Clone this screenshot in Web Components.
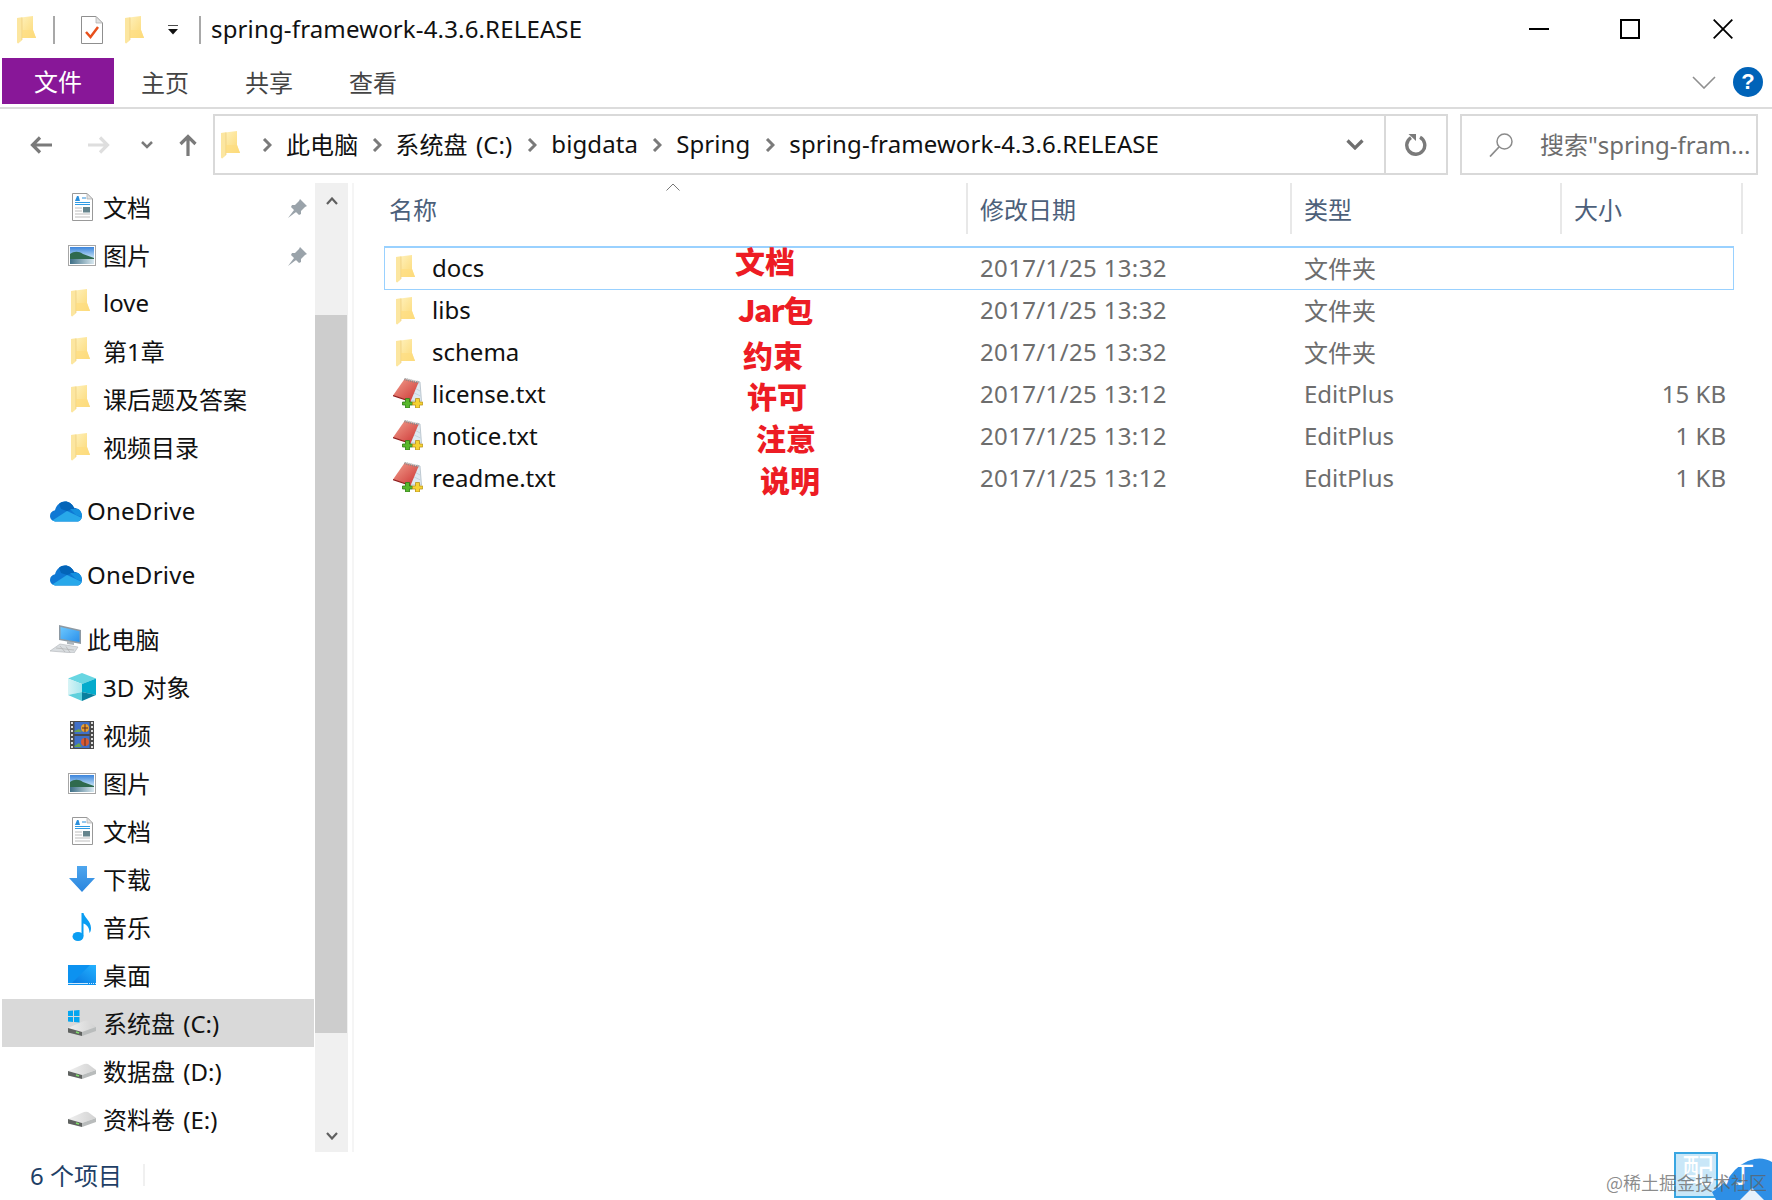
<!DOCTYPE html>
<html lang="zh-CN">
<head>
<meta charset="utf-8">
<title>spring-framework-4.3.6.RELEASE</title>
<style>
  html, body { margin: 0; background: #fff; }
  body { font-family: "Noto Sans", "Noto Sans CJK SC", sans-serif; font-size: 24px; }
</style>
</head>
<body>
<explorer-window>
  <win-titlebar slot="top">spring-framework-4.3.6.RELEASE</win-titlebar>
  <win-ribbon slot="top"></win-ribbon>
  <win-navbar slot="top"></win-navbar>

  <win-sidebar slot="side">
    <nav-group>
      <nav-item icon="doc" pinned>文档</nav-item>
      <nav-item icon="picture" pinned>图片</nav-item>
      <nav-item icon="folder">love</nav-item>
      <nav-item icon="folder">第1章</nav-item>
      <nav-item icon="folder">课后题及答案</nav-item>
      <nav-item icon="folder">视频目录</nav-item>
    </nav-group>
    <nav-group><nav-item icon="cloud" top>OneDrive</nav-item></nav-group>
    <nav-group><nav-item icon="cloud" top>OneDrive</nav-item></nav-group>
    <nav-group>
      <nav-item icon="computer" top>此电脑</nav-item>
      <nav-item icon="cube">3D 对象</nav-item>
      <nav-item icon="film">视频</nav-item>
      <nav-item icon="picture">图片</nav-item>
      <nav-item icon="doc">文档</nav-item>
      <nav-item icon="download">下载</nav-item>
      <nav-item icon="music">音乐</nav-item>
      <nav-item icon="desktop">桌面</nav-item>
      <nav-item icon="cdrive" selected>系统盘 (C:)</nav-item>
      <nav-item icon="drive">数据盘 (D:)</nav-item>
      <nav-item icon="drive">资料卷 (E:)</nav-item>
    </nav-group>
  </win-sidebar>

  <file-list slot="main">
    <file-row icon="folder" date="2017/1/25 13:32" kind="文件夹" focused>docs</file-row>
    <file-row icon="folder" date="2017/1/25 13:32" kind="文件夹">libs</file-row>
    <file-row icon="folder" date="2017/1/25 13:32" kind="文件夹">schema</file-row>
    <file-row icon="notebook" date="2017/1/25 13:12" kind="EditPlus" size="15 KB">license.txt</file-row>
    <file-row icon="notebook" date="2017/1/25 13:12" kind="EditPlus" size="1 KB">notice.txt</file-row>
    <file-row icon="notebook" date="2017/1/25 13:12" kind="EditPlus" size="1 KB">readme.txt</file-row>
    <red-note slot="notes" x="351" y="-4">文档</red-note>
    <red-note slot="notes" x="354" y="45" style="letter-spacing:-1.500px">Jar包</red-note>
    <red-note slot="notes" x="359" y="90">约束</red-note>
    <red-note slot="notes" x="363" y="131">许可</red-note>
    <red-note slot="notes" x="372" y="173">注意</red-note>
    <red-note slot="notes" x="376" y="215">说明</red-note>
  </file-list>

  <win-statusbar slot="bottom">6 个项目</win-statusbar>
  <corner-mark slot="over"></corner-mark>
</explorer-window>

<script>
// every icon is hand drawn, the viewBox doubles as its pixel size
const ICONS = {
  folder: `<svg width="19" height="28" viewBox="0 0 19 28">
    <defs><linearGradient id="f" x1="0" y1="0" x2="1" y2="1"><stop offset="0" stop-color="#fff4c4"/><stop offset="1" stop-color="#fbd468"/></linearGradient></defs>
    <path d="M0 2 16 0V14L19 22H5V24L1 27.5 0 26Z" fill="url(#f)"/>
    <path d="M0 2 5 1.4V22L5 24 1 27.5 0 26Z" fill="#fce6a0"/>
    <path d="M5 1.4V24" stroke="#eac873" stroke-width=".6"/>
    <path d="M5 14H16L19 22H5Z" fill="#fddd80" opacity=".7"/>
  </svg>`,
  doc: `<svg width="21" height="28" viewBox="0 0 21 28">
    <path d="M.5.5H15L20.5 6V27.5H.5Z" fill="#fff" stroke="#999"/>
    <path d="M15 .5V6H20.5Z" fill="#e4e4e4" stroke="#aaa" stroke-width=".7"/>
    <path d="M3 8 5 3H6.5L8 8Z" fill="#2a8fdc"/><path d="M10 5H14" stroke="#2a8fdc"/>
    <path d="M3 9.5H18M3 11.5H18" stroke="#2f9be4"/>
    <path d="M3 15H10M3 18H10M3 21H18M3 24H18" stroke="#bdbdbd"/>
    <rect x="11" y="14" width="7" height="5.5" fill="#66858d"/>
  </svg>`,
  picture: `<svg width="28" height="21" viewBox="0 0 28 21">
    <defs><linearGradient id="s" x1="0" y1="0" x2="0" y2="1"><stop offset="0" stop-color="#3c85dc"/><stop offset=".6" stop-color="#bcdcf2"/></linearGradient>
    <linearGradient id="w" x1="0" y1="0" x2="1" y2="0"><stop offset="0" stop-color="#3e6f86"/><stop offset="1" stop-color="#d8e8f0"/></linearGradient></defs>
    <rect x=".5" y=".5" width="27" height="20" fill="#fff" stroke="#a6a6a6"/>
    <rect x="2" y="2" width="24" height="17" fill="url(#s)"/>
    <path d="M2 9C6 6 11 6 15 9L26 13V15H2Z" fill="#2f6a4e"/>
    <rect x="2" y="14" width="24" height="5" fill="url(#w)"/>
  </svg>`,
  cloud: `<svg width="32" height="21" viewBox="0 0 32 21">
    <defs><clipPath id="c"><path d="M6.5 20.5C2.500 20.500 0 18 0 15 0 12 2 9.800 5 9.300 6.500 3.500 11 .5 15 .5 19 .5 22.500 3 24 6.800 28.500 7 32 10.500 32 15 32 18.500 29.500 20.500 27 20.500Z"/></clipPath></defs>
    <g clip-path="url(#c)">
      <rect width="32" height="21" fill="#0f78d4"/>
      <path d="M8 0H24V8L17 10 11 8Z" fill="#0364b8"/>
      <path d="M20 8 32 8V16L26 14Z" fill="#1490df"/>
      <path d="M0 21 17 10 32 17V21Z" fill="#28a8ea"/>
    </g>
  </svg>`,
  computer: `<svg width="32" height="28" viewBox="0 0 32 28">
    <defs><linearGradient id="m" x1="0" y1="0" x2="1" y2="1"><stop offset="0" stop-color="#6cc8ff"/><stop offset="1" stop-color="#2b90ea"/></linearGradient></defs>
    <path d="M9 0 31 5V19L9 15Z" fill="#8d99a3"/>
    <path d="M10.500 2 29.500 6.300V17L10.500 13.700Z" fill="url(#m)"/>
    <path d="M17 16 24 17.300V20L17 19Z" fill="#aeb6bc"/>
    <path d="M0 26 10 19 28 22 24 28Z" fill="#d9dde0" stroke="#b0b4b8" stroke-width=".6"/>
    <path d="M6 23 24 25M10 21 15 27M16 21.500 20 27.500" stroke="#aaa" stroke-width=".6"/>
  </svg>`,
  cube: `<svg width="28" height="28" viewBox="0 0 28 28">
    <defs><linearGradient id="l" x1="0" y1="0" x2="1" y2="0"><stop offset="0" stop-color="#d8f4f6"/><stop offset="1" stop-color="#a6e6ee"/></linearGradient></defs>
    <path d="M14 0 28 5.500 14 11 0 5.500Z" fill="#68d6e2"/>
    <path d="M0 5.500 14 11V19L0 22Z" fill="url(#l)"/>
    <path d="M28 5.500 14 11V19L28 22Z" fill="#05abcc"/>
    <path d="M0 22 14 19V28Z" fill="#5fd0dc"/>
    <path d="M28 22 14 19V28Z" fill="#0a7f9e"/>
  </svg>`,
  film: `<svg width="24" height="28" viewBox="0 0 24 28">
    <rect width="24" height="28" fill="#4a4a4a"/>
    <path d="M2 1V27M22 1V27" stroke="#ddd" stroke-width="2" stroke-dasharray="2 2"/>
    <rect x="4.500" y="1" width="15" height="12" fill="#3f6fc8"/><rect x="4.500" y="15" width="15" height="12" fill="#3f6fc8"/>
    <path d="M4.500 10 9 8 12 11H4.500ZM4.500 25 9 22 12 26H4.500Z" fill="#6aa34c"/>
    <circle cx="15" cy="7" r="4" fill="#e8a030"/><circle cx="15" cy="21" r="4" fill="#d85a30"/>
    <path d="M15 3V11M12 7H18M15 17V25" stroke="#5a2a20"/>
  </svg>`,
  download: `<svg width="26" height="26" viewBox="0 0 26 26">
    <defs><linearGradient id="d" x1="0" y1="0" x2="0" y2="1"><stop offset="0" stop-color="#4ea6ee"/><stop offset="1" stop-color="#2a85de"/></linearGradient></defs>
    <path d="M8 0H18V12H26L13 26 0 12H8Z" fill="url(#d)"/>
  </svg>`,
  music: `<svg width="20" height="28" viewBox="0 0 20 28">
    <ellipse cx="6" cy="23.500" rx="5.500" ry="4.500" fill="#0a9df2"/>
    <path d="M9.500 0H11.500C12 4 19 8 19 15 19 17 18.500 19 17.500 20 17.500 15 15 11.500 11.500 10.500V23H9.500Z" fill="#0a9df2"/>
  </svg>`,
  desktop: `<svg width="28" height="20" viewBox="0 0 28 20">
    <defs><linearGradient id="t" x1="0" y1="1" x2="1" y2="0"><stop offset="0" stop-color="#0778e0"/><stop offset="1" stop-color="#24b2ff"/></linearGradient></defs>
    <rect width="28" height="20" fill="#0c92f0"/>
    <path d="M4 18 22 0H28V18Z" fill="url(#t)"/>
    <path d="M0 18.500H28" stroke="#fff" stroke-dasharray="20 1 1 1 1 1 1 1 1 1" stroke-width=".8"/>
  </svg>`,
  drive: `<svg width="28" height="16" viewBox="0 0 28 16">
    <defs><linearGradient id="r" x1="0" y1="0" x2="1" y2="0"><stop offset="0" stop-color="#f0f0f0"/><stop offset="1" stop-color="#d2d2d2"/></linearGradient></defs>
    <path d="M0 8 16 1Q18 .3 20 1L28 7 14 12Z" fill="url(#r)"/>
    <path d="M0 8 14 12V16L0 12.500Z" fill="#5f6260"/>
    <path d="M14 12 28 7V11L14 16Z" fill="#b9bcbc"/>
    <path d="M8 12 11 13" stroke="#7fdc6a" stroke-width="1.500"/>
  </svg>`,
  cdrive: `<svg width="28" height="26" viewBox="0 0 28 26">
    <defs><linearGradient id="r" x1="0" y1="0" x2="1" y2="0"><stop offset="0" stop-color="#f0f0f0"/><stop offset="1" stop-color="#d2d2d2"/></linearGradient></defs>
    <g transform="translate(0 10)">
      <path d="M0 8 16 1Q18 .3 20 1L28 7 14 12Z" fill="url(#r)"/>
      <path d="M0 8 14 12V16L0 12.500Z" fill="#5f6260"/>
      <path d="M14 12 28 7V11L14 16Z" fill="#b9bcbc"/>
      <path d="M8 12 11 13" stroke="#7fdc6a" stroke-width="1.500"/>
    </g>
    <path d="M0 1 5 .5V6H0ZM6 .4 11.500 0V6H6ZM0 7H5V12L0 11.500ZM6 7H11.500V12.500L6 12Z" fill="#05a6f0"/>
  </svg>`,
  notebook: `<svg width="30" height="30" viewBox="0 0 30 30">
    <defs><linearGradient id="n" x1="0" y1="0" x2="1" y2="1"><stop offset="0" stop-color="#f2a08e"/><stop offset="1" stop-color="#cc3232"/></linearGradient></defs>
    <path d="M24 3 27 4 28.500 23H16Z" fill="#dde8f0" stroke="#a9b6c0" stroke-width=".7"/>
    <path d="M20 9 27 13M19 14 27.500 18" stroke="#b9c8d4" stroke-width=".7"/>
    <path d="M0 17.500 11.500 1 25.500 4.500 17.500 23.500Z" fill="url(#n)"/>
    <path d="M11.500 1 25.500 4.500" stroke="#888" stroke-width="2.500" stroke-dasharray="1 1"/>
    <path d="M0 17.500 17.500 23.500" stroke="#8e1d1d" stroke-width="1.200"/>
    <path d="M9.500 24H12.500V20.500H16.500V24H19.500V27H16.500V30H12.500V27H9.500Z" fill="#58b82c" stroke="#2f7a18" stroke-width=".8"/>
    <path d="M19.500 24H22.500V20.500H26.500V24H29.700V27H26.500V30H22.500V27H19.500Z" fill="#f6d232" stroke="#b8921a" stroke-width=".8"/>
  </svg>`
};

class ExplorerWindow extends HTMLElement {
  constructor() {
    super();
    this.attachShadow({ mode: 'open' });
    this.shadowRoot.innerHTML = `
      <style>
        :host { display: flex; flex-direction: column; position: relative; width: 1772px; height: 1200px; overflow: hidden; background: #fff; color: #111; }
        .main { display: flex; height: 969px; }
      </style>
      <slot name="top"></slot>
      <div class="main"><slot name="side"></slot><slot name="main"></slot></div>
      <slot name="bottom"></slot>
      <slot name="over"></slot>
    `;
  }
}

class WinTitlebar extends HTMLElement {
  constructor() {
    super();
    this.attachShadow({ mode: 'open' });
    this.shadowRoot.innerHTML = `
      <style>
        :host { display: flex; align-items: center; height: 58px; padding: 2px 0 0 17px; box-sizing: border-box; color: #111; }
        .sep { width: 2px; height: 28px; background: #a8a8a8; }
        .title { margin-left: 10px; flex: 1; padding-bottom: 4px; letter-spacing: .15px; white-space: nowrap; }
        .ctl { display: flex; align-items: center; margin-right: 39px; padding-bottom: 3px; }
        svg { display: block; }
      </style>
      ${ICONS.folder}
      <div class="sep" style="margin-left:17px"></div>
      <svg style="margin-left:26px" width="22" height="28" viewBox="0 0 22 28"><path d="M.5.5H15L21.500 7V27.500H.5Z" fill="#fff" stroke="#8f8f8f"/><path d="M15 .5V7H21.500Z" fill="#e2e2e2" stroke="#aaa" stroke-width=".7"/><path d="M5 16 9.500 21 17 11" fill="none" stroke="#e8501c" stroke-width="2.500"/></svg>
      <span style="margin-left:22px;display:block">${ICONS.folder}</span>
      <svg style="margin-left:23px" width="12" height="10" viewBox="0 0 12 10"><path d="M1 0H11" stroke="#111" stroke-width="1.500"/><path d="M1 4H11L6 9.500Z" fill="#111"/></svg>
      <div class="sep" style="margin-left:20px"></div>
      <div class="title"><slot></slot></div>
      <div class="ctl">
        <svg width="20" height="20" viewBox="0 0 20 20"><path d="M0 10H20" stroke="#000" stroke-width="2"/></svg>
        <svg style="margin-left:71px" width="20" height="20" viewBox="0 0 20 20"><rect x="1" y="1" width="18" height="18" fill="none" stroke="#000" stroke-width="2"/></svg>
        <svg style="margin-left:73px" width="20" height="20" viewBox="0 0 20 20"><path d="M.7.7 19.300 19.300M19.300.7.7 19.300" stroke="#000" stroke-width="1.800"/></svg>
      </div>
    `;
  }
}

class WinRibbon extends HTMLElement {
  constructor() {
    super();
    this.attachShadow({ mode: 'open' });
    this.shadowRoot.innerHTML = `
      <style>
        :host { display: flex; height: 51px; padding-left: 2px; box-sizing: border-box; border-bottom: 2px solid #dcdcdc; color: #444; }
        .tab { height: 46px; display: flex; align-items: center; justify-content: center; width: 104px; }
        .file { width: 112px; background: #881798; color: #fff; margin-right: -1px; box-sizing: border-box; padding-bottom: 2px; }
        .right { margin-left: auto; display: flex; align-items: center; height: 46px; gap: 17px; margin-right: 9px; }
        .help { width: 30px; height: 30px; border-radius: 50%; background: #0063b8; color: #fff; font: bold 22px/30px "Liberation Sans", sans-serif; text-align: center; }
        svg { display: block; }
      </style>
      <div class="tab file">文件</div>
      <div class="tab">主页</div>
      <div class="tab">共享</div>
      <div class="tab">查看</div>
      <div class="right" style="margin-top:1px">
        <svg width="24" height="13" viewBox="0 0 24 13"><path d="M1 1 12 12 23 1" fill="none" stroke="#8f8f8f" stroke-width="1.600"/></svg>
        <div class="help">?</div>
      </div>
    `;
  }
}

class WinNavbar extends HTMLElement {
  constructor() {
    super();
    this.attachShadow({ mode: 'open' });
    // text, then the margins left and right of the chevron in front of it
    const crumbs = [
      ['此电脑', 22, 14], ['系统盘 (C:)', 14, 13], ['bigdata', 15, 14],
      ['Spring', 14, 14], ['spring-framework-4.3.6.RELEASE', 15, 14]
    ];
    const sep = (l, r) => `<svg style="margin:0 ${r}px 0 ${l}px" width="10" height="14" viewBox="0 0 10 14"><path d="M2 1 8 7 2 13" fill="none" stroke="#7a7a7a" stroke-width="3"/></svg>`;
    this.shadowRoot.innerHTML = `
      <style>
        :host { display: flex; align-items: center; height: 74px; box-sizing: border-box; padding: 0 0 3px 30px; }
        svg { display: block; flex: none; }
        .box { display: flex; align-items: center; height: 61px; box-sizing: border-box; border: 2px solid #d9d9d9; }
        .addr { width: 1235px; margin-left: 16px; padding-left: 6px; }
        .crumb { white-space: nowrap; margin-bottom: 2px; letter-spacing: .1px; word-spacing: 2px; }
        .tail { margin-left: auto; display: flex; align-items: center; height: 100%; }
        .refresh { width: 62px; height: 100%; border-left: 2px solid #d9d9d9; box-sizing: border-box; display: flex; align-items: center; justify-content: center; margin-left: 20px; }
        .search { width: 298px; margin-left: 12px; padding-left: 27px; color: #6d6d6d; white-space: nowrap; }
        .search span { margin: 0 0 2px 27px; }
      </style>
      <svg width="22" height="18" viewBox="0 0 22 18"><path d="M22 9H3M10 1.500 2.500 9 10 16.500" fill="none" stroke="#7a7a7a" stroke-width="3.200"/></svg>
      <svg style="margin-left:36px" width="22" height="18" viewBox="0 0 22 18"><path d="M0 9H19M12 1.500 19.500 9 12 16.500" fill="none" stroke="#dedede" stroke-width="3.200"/></svg>
      <svg style="margin-left:31px" width="12" height="8" viewBox="0 0 12 8"><path d="M1 1 6 6 11 1" fill="none" stroke="#7a7a7a" stroke-width="2.500"/></svg>
      <svg style="margin-left:26px" width="18" height="22" viewBox="0 0 18 22"><path d="M9 22V3M1.500 10 9 2.500 16.500 10" fill="none" stroke="#7a7a7a" stroke-width="3.200"/></svg>
      <div class="box addr">
        ${ICONS.folder}
        ${crumbs.map(c => `${sep(c[1], c[2])}<span class="crumb">${c[0]}</span>`).join('')}
        <div class="tail">
          <svg width="18" height="11" viewBox="0 0 18 11"><path d="M1.500 1.500 9 9 16.500 1.500" fill="none" stroke="#6f6f6f" stroke-width="3.200"/></svg>
          <div class="refresh"><svg width="22" height="22" viewBox="0 0 22 22"><path d="M6 3.600A9 9 0 1 0 15 3.300" fill="none" stroke="#7a7a7a" stroke-width="3.400"/><path d="M3.500 0 11 0 11 7Z" fill="#7a7a7a"/></svg></div>
        </div>
      </div>
      <div class="box search">
        <svg width="24" height="24" viewBox="0 0 24 24"><circle cx="15.500" cy="8.500" r="7.500" fill="none" stroke="#8b8b8b" stroke-width="1.500"/><path d="M10 14 1 23.500" stroke="#8b8b8b" stroke-width="1.800"/></svg>
        <span>搜索"spring-fram...</span>
      </div>
    `;
  }
}

class WinSidebar extends HTMLElement {
  constructor() {
    super();
    this.attachShadow({ mode: 'open' });
    this.shadowRoot.innerHTML = `
      <style>
        :host { display: flex; width: 354px; flex: none; height: 969px; box-sizing: border-box; border-right: 2px solid #f5f5f5; }
        .list { width: 315px; box-sizing: border-box; overflow: hidden; }
        .bar { width: 33px; display: grid; grid-template-rows: 132px 718px 1fr; background: #f0f0f0; }
        .thumb { background: #cdcdcd; margin-right: 1px; }
        .up, .down { display: flex; justify-content: center; padding-top: 14px; }
        .down { align-items: flex-end; padding: 0 0 12px; }
        svg { display: block; }
      </style>
      <div class="list"><slot></slot></div>
      <div class="bar">
        <div class="up"><svg width="12" height="8" viewBox="0 0 12 8"><path d="M1 7 6 1.500 11 7" fill="none" stroke="#606060" stroke-width="2.200"/></svg></div>
        <div class="thumb"></div>
        <div class="down"><svg width="12" height="8" viewBox="0 0 12 8"><path d="M1 1 6 6.500 11 1" fill="none" stroke="#606060" stroke-width="2.200"/></svg></div>
      </div>
    `;
  }
}

class NavGroup extends HTMLElement {
  constructor() {
    super();
    this.attachShadow({ mode: 'open' });
    this.shadowRoot.innerHTML = `
      <style>:host { display: block; margin-bottom: 16px; }</style>
      <slot></slot>
    `;
  }
}

class NavItem extends HTMLElement {
  constructor() {
    super();
    this.attachShadow({ mode: 'open' });
  }

  connectedCallback() {
    const top = this.hasAttribute('top');
    const folder = this.getAttribute('icon') === 'folder';
    const pin = this.hasAttribute('pinned') ? `<svg class="pin" width="20" height="20" viewBox="0 0 20 20"><path d="M12 1 19 8 17 9 13 13 13 16 11 17 3 9 4 7 7 7 11 3ZM6 12 0 20 8 14Z" fill="#9aa3aa"/></svg>` : '';
    this.shadowRoot.innerHTML = `
      <style>
        :host { display: flex; align-items: center; height: 48px; margin-left: 2px; width: 312px; color: #111; }
        :host([selected]) { background: #d9d9d9; }
        .icon { width: ${top ? 32 : 28}px; margin-left: ${top ? 48 : 66}px; margin-right: ${top ? 5 : 7}px; display: flex; justify-content: center; flex: none; box-sizing: border-box; padding-right: ${folder ? 3 : 0}px; }
        .icon svg { display: block; }
        .label { display: block; margin-bottom: 2px; word-spacing: 2px; letter-spacing: ${top ? .25 : 0}px; }
        .pin { margin: 2px 6px 0 auto; }
      </style>
      <div class="icon">${ICONS[this.getAttribute('icon')]}</div>
      <span class="label"><slot></slot></span>
      ${pin}
    `;
  }
}

class FileList extends HTMLElement {
  constructor() {
    super();
    this.attachShadow({ mode: 'open' });
    const cols = [
      ['名称', 584, 5], ['修改日期', 324, 12], ['类型', 270, 12], ['大小', 181, 12]
    ];
    this.shadowRoot.innerHTML = `
      <style>
        :host { display: block; flex: 1; position: relative; padding-left: 30px; }
        .head { display: flex; height: 51px; margin-bottom: 13px; color: #4c607a; position: relative; }
        .col { box-sizing: border-box; border-right: 2px solid #e8e8e8; display: flex; align-items: center; padding-bottom: 1px; }
        .caret { position: absolute; left: 282px; top: 0; }
        .notes { position: absolute; top: 64px; left: 30px; }
        svg { display: block; }
      </style>
      <div class="head">
        ${cols.map(c => `<div class="col" style="width:${c[1]}px;padding-left:${c[2]}px">${c[0]}</div>`).join('')}
        <svg class="caret" width="14" height="8" viewBox="0 0 14 8"><path d="M.5 7.500 7 1 13.500 7.500" fill="none" stroke="#777" stroke-width="1"/></svg>
      </div>
      <slot></slot>
      <div class="notes"><slot name="notes"></slot></div>
    `;
  }
}

class FileRow extends HTMLElement {
  constructor() {
    super();
    this.attachShadow({ mode: 'open' });
  }

  connectedCallback() {
    const folder = this.getAttribute('icon') === 'folder';
    this.shadowRoot.innerHTML = `
      <style>
        :host { display: grid; grid-template-columns: 584px 324px 270px 172px; width: 1350px; height: 42px; padding-bottom: 2px; align-items: center; color: #6d6d6d; box-sizing: border-box; }
        :host([focused]) { height: 43px; margin-bottom: -1px; box-shadow: 0 0 0 1px #99d1ff inset, 0 -1px 0 #99d1ff; }
        .name { display: flex; align-items: center; color: #111; padding-left: 9px; }
        .icon { width: 30px; margin: ${folder ? 3 : 0}px 9px 0 0; padding-right: ${folder ? 5 : 0}px; box-sizing: border-box; display: flex; justify-content: center; }
        .icon svg { display: block; }
        .date { padding-left: 12px; letter-spacing: .35px; }
        .kind { padding-left: 12px; }
        .size { text-align: right; padding-right: 8px; }
      </style>
      <div class="name"><div class="icon">${ICONS[this.getAttribute('icon')]}</div><slot></slot></div>
      <div class="date">${this.getAttribute('date')}</div>
      <div class="kind">${this.getAttribute('kind')}</div>
      <div class="size">${this.getAttribute('size') || ''}</div>
    `;
  }
}

// the red labels were typed over the screenshot, so they sit on a free layer
class RedNote extends HTMLElement {
  constructor() {
    super();
    this.attachShadow({ mode: 'open' });
  }

  connectedCallback() {
    this.shadowRoot.innerHTML = `
      <style>
        :host { position: absolute; left: ${this.getAttribute('x')}px; top: ${this.getAttribute('y')}px; color: #ed1c24; font: 900 30px/34px "Noto Sans CJK SC", sans-serif; white-space: nowrap; }
      </style>
      <slot></slot>
    `;
  }
}

class WinStatusbar extends HTMLElement {
  constructor() {
    super();
    this.attachShadow({ mode: 'open' });
    this.shadowRoot.innerHTML = `
      <style>
        :host { display: flex; align-items: center; height: 48px; padding: 0 0 4px 30px; box-sizing: border-box; color: #1f3f66; }
        .sep { position: absolute; left: 143px; bottom: 14px; width: 2px; height: 22px; background: #f0f0f0; }
      </style>
      <slot></slot>
      <div class="sep"></div>
    `;
  }
}

class CornerMark extends HTMLElement {
  constructor() {
    super();
    this.attachShadow({ mode: 'open' });
    this.shadowRoot.innerHTML = `
      <style>
        :host { position: absolute; right: 0; bottom: 0; width: 170px; height: 48px; }
        .tile { position: absolute; left: 72px; top: 0; width: 44px; height: 46px; box-sizing: border-box; background: #c9e7f8; border: 2px solid #38a6e2; }
        .blob { position: absolute; right: 0; top: 6px; width: 60px; height: 42px; }
        .white { position: absolute; left: 80px; top: -2px; color: #fff; font: 32px/36px "Noto Sans CJK SC", sans-serif; white-space: nowrap; letter-spacing: 9px; }
        .mark { position: absolute; left: 4px; top: 18px; color: rgba(95,95,95,.72); font: 18px/24px "Noto Sans CJK SC", sans-serif; white-space: nowrap; }
      </style>
      <div class="tile"></div>
      <svg class="blob" viewBox="0 0 60 42"><path d="M0 34Q10 28 18 18 28 4 42 1 52 -1 60 4V42H4Z" fill="#2e8fe6"/><path d="M28 42 40 30 52 42Z" fill="#e8f2fb"/></svg>
      <div class="white">配厅</div>
      <div class="mark">@稀土掘金技术社区</div>
    `;
  }
}

customElements.define('explorer-window', ExplorerWindow);
customElements.define('win-titlebar', WinTitlebar);
customElements.define('win-ribbon', WinRibbon);
customElements.define('win-navbar', WinNavbar);
customElements.define('win-sidebar', WinSidebar);
customElements.define('nav-group', NavGroup);
customElements.define('nav-item', NavItem);
customElements.define('file-list', FileList);
customElements.define('file-row', FileRow);
customElements.define('red-note', RedNote);
customElements.define('win-statusbar', WinStatusbar);
customElements.define('corner-mark', CornerMark);
</script>
</body>
</html>
